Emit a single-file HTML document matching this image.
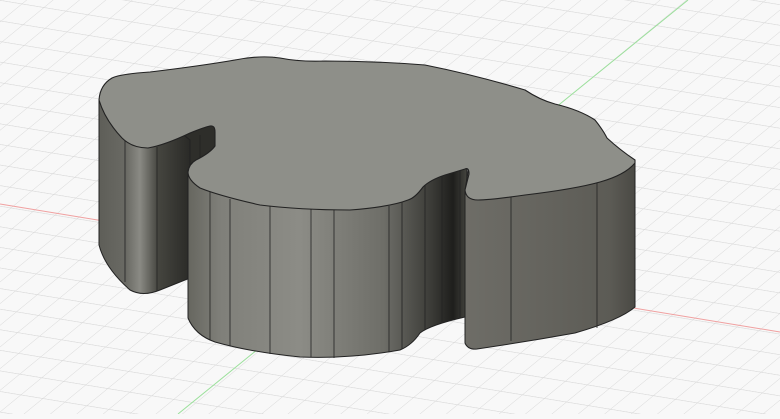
<!DOCTYPE html>
<html><head><style>html,body{margin:0;padding:0;background:#f8f8f8;overflow:hidden}</style></head>
<body>
<svg width="780" height="414" viewBox="0 0 780 414" xmlns="http://www.w3.org/2000/svg">
<defs>
<pattern id="g" width="22" height="22" patternUnits="userSpaceOnUse" patternTransform="matrix(1,0.164,-0.95,0.78,0,0)">
<path d="M0 0H22M0 0V22" stroke="#d6d6d6" stroke-width="1.1" fill="none"/>
</pattern>
<linearGradient id="fw" gradientUnits="userSpaceOnUse" x1="188" y1="0" x2="467" y2="0">
<stop offset="0" stop-color="#66665f"/><stop offset="0.12" stop-color="#80807a"/>
<stop offset="0.4" stop-color="#8c8c86"/><stop offset="0.7" stop-color="#6e6e68"/>
<stop offset="0.87" stop-color="#3c3c38"/><stop offset="0.95" stop-color="#1e1e1c"/><stop offset="1" stop-color="#45453f"/>
</linearGradient>
<linearGradient id="rw" gradientUnits="userSpaceOnUse" x1="465" y1="0" x2="635" y2="0">
<stop offset="0" stop-color="#6e6d67"/><stop offset="0.5" stop-color="#64635d"/><stop offset="0.85" stop-color="#5c5b55"/><stop offset="1" stop-color="#4a4944"/>
</linearGradient>
<linearGradient id="lw" gradientUnits="userSpaceOnUse" x1="99" y1="0" x2="190" y2="0">
<stop offset="0" stop-color="#5e5e58"/><stop offset="0.3" stop-color="#6a6a64"/><stop offset="0.45" stop-color="#8a8a84"/>
<stop offset="0.65" stop-color="#45453f"/><stop offset="1" stop-color="#2a2a27"/>
</linearGradient>
</defs>
<rect width="780" height="414" fill="#f8f8f8"/>
<rect width="780" height="414" fill="url(#g)"/>
<line x1="0" y1="204" x2="780" y2="332" stroke="#f0a0a0" stroke-width="1"/>
<line x1="688" y1="0" x2="178" y2="414" stroke="#9be09b" stroke-width="1"/>
<path d="M185 128 L216 122 L216 175 L185 185Z" fill="#2e2e2a"/>
<path d="M99 100 L99 245 Q105 268 130 290 Q143 297 160 290 L190 278 L190 140 L140 100Z" fill="url(#lw)" stroke="#222" stroke-width="1"/>
<line x1="125" y1="140" x2="125" y2="282" stroke="#222" stroke-width="0.8"/>
<line x1="157" y1="147" x2="157" y2="291" stroke="#222" stroke-width="0.8"/>
<line x1="200" y1="135" x2="200" y2="175" stroke="#222" stroke-width="0.8"/>
<path d="M188 170 L188 318 Q195 335 215 342 Q250 352 300 357 Q350 359 400 350 Q412 345 420 333 Q430 325 465 317 L467 168 L300 170Z" fill="url(#fw)" stroke="#222" stroke-width="1"/>
<g stroke="#222" stroke-width="0.8">
<line x1="210" y1="190" x2="210" y2="340"/><line x1="230" y1="199" x2="230" y2="346"/>
<line x1="270" y1="206" x2="270" y2="354"/><line x1="311" y1="209" x2="311" y2="357"/>
<line x1="334" y1="210" x2="334" y2="358"/><line x1="389" y1="206" x2="389" y2="352"/>
<line x1="402" y1="200" x2="402" y2="349"/><line x1="425" y1="182" x2="425" y2="330"/>
<line x1="442" y1="175" x2="442" y2="322"/><line x1="460" y1="169" x2="460" y2="318"/>
</g>
<path d="M465 190 L465 343 Q468 350 477 349 Q525 342 575 333 Q620 320 635 307 L635 160 L470 160Z" fill="url(#rw)" stroke="#222" stroke-width="1"/>
<line x1="511" y1="195" x2="511" y2="341" stroke="#222" stroke-width="0.8"/>
<line x1="597" y1="180" x2="597" y2="328" stroke="#222" stroke-width="0.8"/>
<path d="M99 100 Q100 85 112 78 Q120 74 150 72 Q200 66 235 60 Q260 55 280 58 Q300 62 325 61 Q375 61 425 65 Q475 75 525 90 Q540 100 555 104 Q580 110 595 120 Q603 130 607 138 Q620 150 635 160 L635 163 Q625 175 600 182 Q575 189 525 195 Q490 200 478 200 Q466 200 465 190 L469 174 Q469 167 465 169 L445 175 Q430 180 423 187 Q415 198 408 200 Q390 207 350 210 Q300 210 260 205 Q220 196 200 188 Q188 180 188 172 Q189 164 196 160 Q210 153 215 146 L215 132 Q215 125 210 126 Q205 127 190 133 Q165 145 148 148 Q132 148 122 138 Q105 120 99 100Z" fill="#8e8f89" stroke="#222" stroke-width="1.1"/>
</svg>
</body></html>
